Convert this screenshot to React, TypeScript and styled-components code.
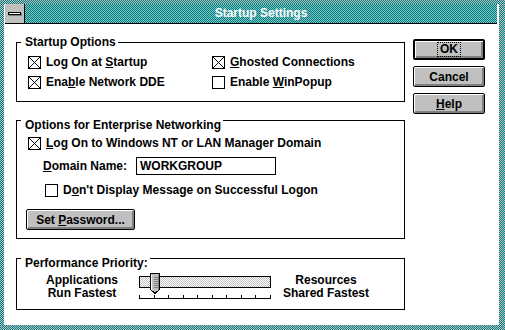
import { ReactNode } from 'react';
import styled, { createGlobalStyle } from 'styled-components';

const Global = createGlobalStyle`
  html, body { margin: 0; padding: 0; background: #fff; }
  body {
    font-family: "Liberation Sans", Arial, sans-serif;
    font-weight: bold;
    font-size: 12px;
    color: #000;
  }
`;

const checker = (a: string, b: string) =>
  `repeating-conic-gradient(${a} 0% 25%, ${b} 0% 50%) 0 0 / 2px 2px`;

const Frame = styled.div`
  width: 505px;
  height: 330px;
  box-sizing: border-box;
  padding: 4px 6px 5px 4px;
  background: ${checker('#008080', '#c0c0c0')};
  display: flex;
  flex-direction: column;
`;

const Inner = styled.div`
  flex: 1;
  background: #fff;
  padding: 0 2px 0 1px;
  display: flex;
  flex-direction: column;
`;

const TitleBar = styled.div`
  height: 19px;
  border-bottom: 1px solid #000;
  display: flex;
`;

const ControlBox = styled.div`
  width: 19px;
  background: #c0c0c0;
  border-right: 1px solid #000;
  display: flex;
  align-items: center;
  justify-content: center;
`;

const MenuDash = styled.div`
  width: 11px;
  height: 1px;
  background: #fff;
  border: 1px solid #000;
  box-shadow: 1px 1px 0 #808080;
`;

const Caption = styled.div`
  flex: 1;
  background: ${checker('#008080', '#80c0c0')};
  color: #fff;
  text-align: center;
  line-height: 19px;
`;

const Client = styled.div`
  display: flex;
  padding: 11px 0 0 11px;
`;

const LeftCol = styled.div`
  width: 389px;
  display: flex;
  flex-direction: column;
`;

const ButtonCol = styled.div`
  width: 72px;
  margin-left: 8px;
  padding-top: 4px;
  display: flex;
  flex-direction: column;
  gap: 6px;
`;

const Group = styled.fieldset<{ $mt?: number; $pad: string }>`
  margin: ${(p) => p.$mt ?? 0}px 0 0 0;
  padding: ${(p) => p.$pad};
  border: 1px solid #000;
  min-width: 0;
`;

const Legend = styled.legend<{ $low?: boolean }>`
  margin-left: 4px;
  padding: ${(p) => (p.$low ? '9px 2px 0 4px' : '0 2px 0 4px')};
  line-height: 14px;
`;

const OptionGrid = styled.div`
  display: grid;
  grid-template-columns: 184px 1fr;
  padding-left: 11px;
`;

const Check = styled.label<{ $ml?: number }>`
  display: flex;
  align-items: center;
  gap: 5px;
  height: 20px;
  margin-left: ${(p) => p.$ml ?? 0}px;
  white-space: nowrap;
`;

const U = styled.span`
  text-decoration: underline;
`;

const DomainRow = styled.div`
  display: flex;
  align-items: center;
  height: 18px;
  margin: 4px 0 5px 26px;
`;

const DomainLabel = styled.span`
  width: 93px;
`;

const TextBox = styled.div`
  width: 140px;
  height: 18px;
  box-sizing: border-box;
  border: 1px solid #000;
  padding-left: 3px;
  line-height: 16px;
`;

const PushButton = styled.button<{ $default?: boolean; $w?: number }>`
  width: ${(p) => p.$w ?? 72}px;
  height: 21px;
  box-sizing: border-box;
  padding: 0;
  margin: 0;
  border: ${(p) => (p.$default ? 2 : 1)}px solid #000;
  border-radius: 2px;
  background: #c0c0c0;
  box-shadow: inset 1px 1px 0 #fff, inset -2px -2px 0 #808080;
  font: inherit;
  color: #000;
  display: flex;
  align-items: center;
  justify-content: center;
  white-space: pre;
`;

const Focus = styled.span`
  outline: 1px dotted #000;
  outline-offset: 0;
  padding: 0 2px;
  line-height: 13px;
`;

const PassButton = styled(PushButton)`
  margin: 9px 0 0 9px;
`;

const SliderRow = styled.div`
  display: flex;
  padding-top: 2px;
`;

const EndLabel = styled.div<{ $w: number; $ml: number }>`
  width: ${(p) => p.$w}px;
  margin-left: ${(p) => p.$ml}px;
  padding-top: 2px;
  text-align: center;
  line-height: 13px;
  white-space: nowrap;
`;

const Slider = styled.div`
  position: relative;
  width: 132px;
  height: 28px;
  margin-left: 18px;
`;

const Track = styled.div`
  margin-top: 4px;
  height: 12px;
  box-sizing: border-box;
  border: 1px solid #000;
  background: ${checker('#c0c0c0', '#ffffff')};
`;

const Thumb = styled.svg`
  position: absolute;
  left: 11px;
  top: 1px;
`;

const Ticks = styled.svg`
  display: block;
  margin-top: 6px;
`;

function Box({ checked }: { checked?: boolean }) {
  return (
    <svg width="13" height="13" viewBox="0 0 13 13" shapeRendering="crispEdges">
      <rect x="0.5" y="0.5" width="12" height="12" fill="#fff" stroke="#000" />
      {checked && <path d="M1 1L12 12M12 1L1 12" stroke="#000" />}
    </svg>
  );
}

function Option({ checked, ml, children }: { checked?: boolean; ml?: number; children: ReactNode }) {
  return (
    <Check $ml={ml}>
      <Box checked={checked} />
      <span>{children}</span>
    </Check>
  );
}

const tickX = Array.from({ length: 10 }, (_, i) => Math.round(i * 14.55) + 0.5);

export default function App() {
  return (
    <>
      <Global />
      <Frame>
        <Inner>
          <TitleBar>
            <ControlBox>
              <MenuDash />
            </ControlBox>
            <Caption>Startup Settings</Caption>
          </TitleBar>
          <Client>
            <LeftCol>
              <Group $pad="3px 0 9px 0">
                <Legend>Startup Options</Legend>
                <OptionGrid>
                  <Option checked>
                    Log On at <U>S</U>tartup
                  </Option>
                  <Option checked>
                    <U>G</U>hosted Connections
                  </Option>
                  <Option checked>
                    Ena<U>b</U>le Network DDE
                  </Option>
                  <Option>
                    Enable <U>W</U>inPopup
                  </Option>
                </OptionGrid>
              </Group>

              <Group $mt={7} $pad="1px 0 8px 0">
                <Legend $low>Options for Enterprise Networking</Legend>
                <Option checked ml={11}>
                  <U>L</U>og On to Windows NT or LAN Manager Domain
                </Option>
                <DomainRow>
                  <DomainLabel>
                    <U>D</U>omain Name:
                  </DomainLabel>
                  <TextBox>WORKGROUP</TextBox>
                </DomainRow>
                <Option ml={28}>
                  D<U>o</U>n't Display Message on Successful Logon
                </Option>
                <PassButton $w={109}>
                  <span>
                    Set <U>P</U>assword...
                  </span>
                </PassButton>
              </Group>

              <Group $mt={8} $pad="0 0 9px 0">
                <Legend $low>Performance Priority:</Legend>
                <SliderRow>
                  <EndLabel $w={78} $ml={26}>
                    Applications
                    <br />
                    Run Fastest
                  </EndLabel>
                  <Slider>
                    <Track />
                    <Thumb width="10" height="21" viewBox="0 0 10 21" shapeRendering="crispEdges">
                      <path d="M0.5 0.5H9.5V16.5L5 20.5L0.5 16.5Z" fill="#c0c0c0" stroke="#000" />
                      <path d="M1.5 1.5V16.5" stroke="#fff" />
                      <path d="M8.5 1.5V16.5" stroke="#808080" />
                      {[4, 6, 8, 10, 12, 14].map((y) => (
                        <path key={y} d={`M4 ${y + 0.5}H8`} stroke="#808080" />
                      ))}
                    </Thumb>
                    <Ticks width="133" height="5" viewBox="0 0 133 5" shapeRendering="crispEdges">
                      <path d="M0 4.5H132" stroke="#000" />
                      {tickX.map((x) => (
                        <path key={x} d={`M${x} 1V5`} stroke="#000" />
                      ))}
                    </Ticks>
                  </Slider>
                  <EndLabel $w={94} $ml={8}>
                    Resources
                    <br />
                    Shared Fastest
                  </EndLabel>
                </SliderRow>
              </Group>
            </LeftCol>

            <ButtonCol>
              <PushButton $default>
                <Focus>OK</Focus>
              </PushButton>
              <PushButton>Cancel</PushButton>
              <PushButton>
                <span>
                  <U>H</U>elp
                </span>
              </PushButton>
            </ButtonCol>
          </Client>
        </Inner>
      </Frame>
    </>
  );
}
